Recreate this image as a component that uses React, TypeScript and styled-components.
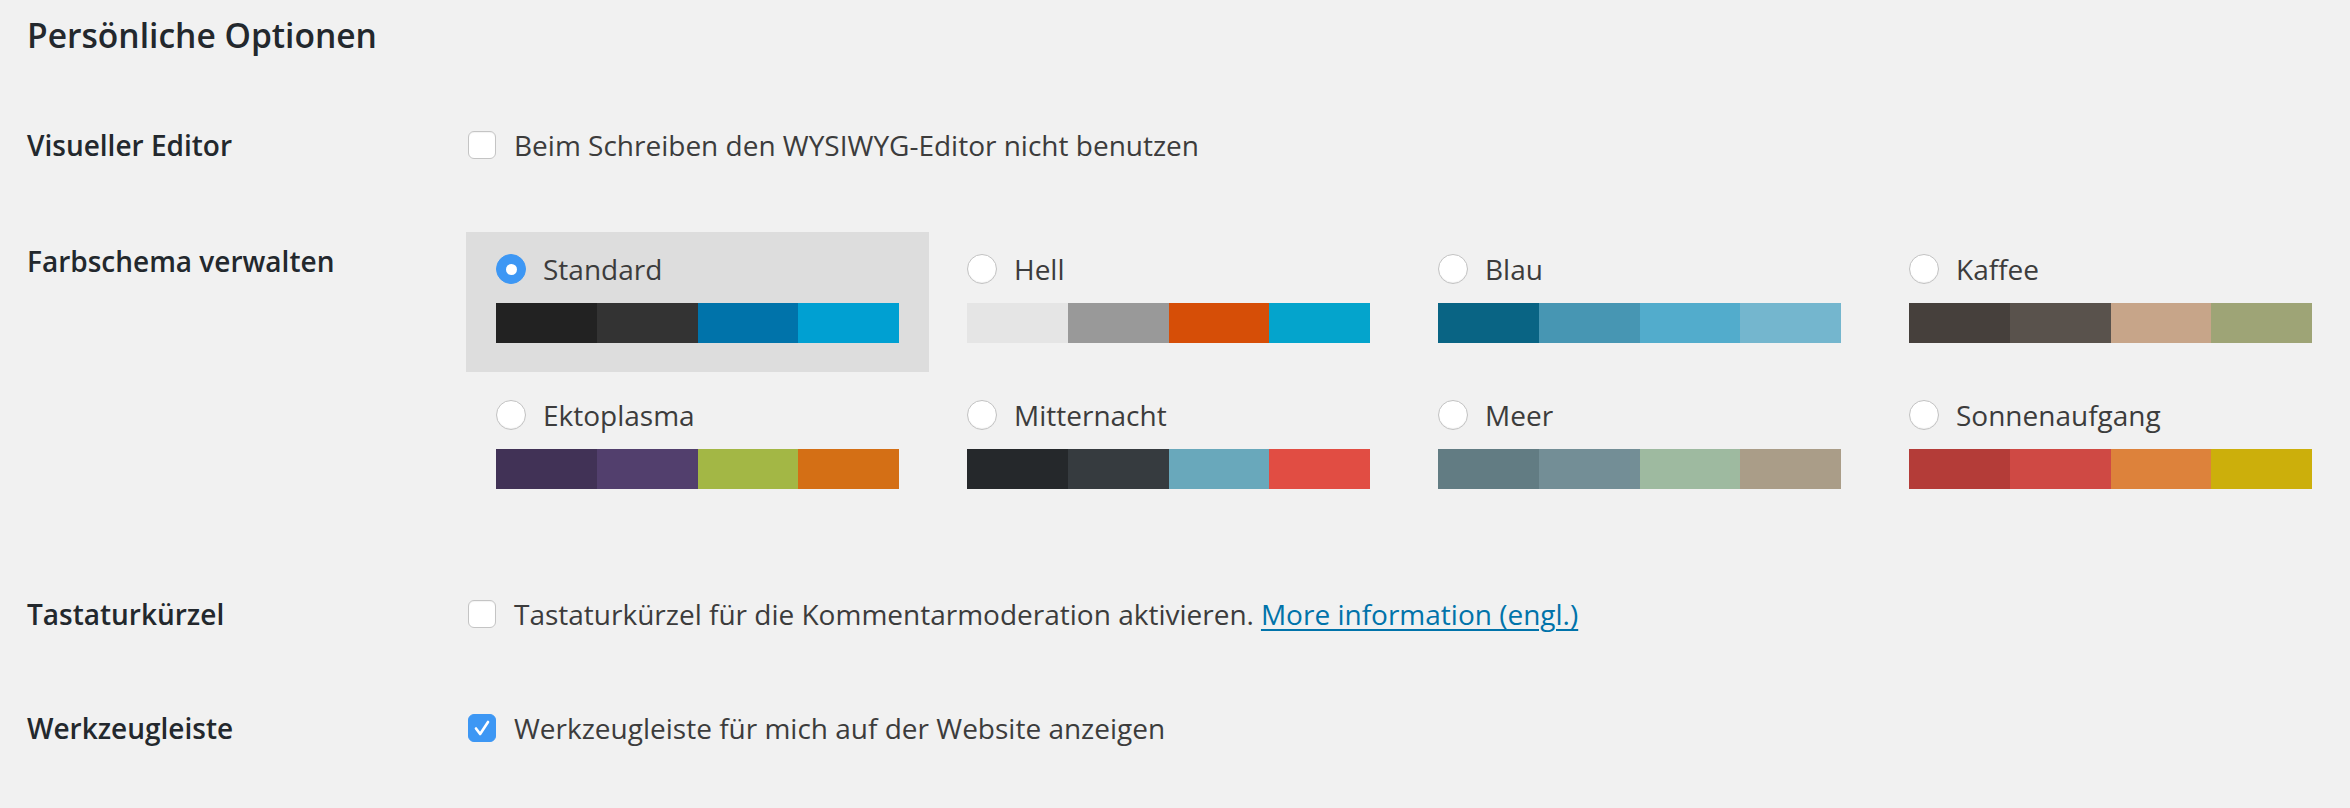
import React from 'react';
import styled, { createGlobalStyle } from 'styled-components';

const GlobalStyle = createGlobalStyle`
  html, body {
    margin: 0;
    padding: 0;
    background: #f1f1f1;
  }
  body {
    width: 2350px;
    height: 808px;
    overflow: hidden;
    font-family: "Open Sans", "Liberation Sans", sans-serif;
    color: #3c3c3c;
  }
`;

const Wrap = styled.div`
  padding-left: 27px;
`;

const Heading = styled.h2`
  margin: 0;
  padding-top: 13px;
  font-size: 33.6px;
  line-height: 44px;
  font-weight: 600;
  color: #23282d;
`;

const FormTable = styled.div`
  margin-top: 28px;
`;

const Row = styled.div<{ $pt: number; $pb: number }>`
  display: grid;
  grid-template-columns: 439px 1fr;
  padding: ${p => p.$pt}px 0 ${p => p.$pb}px;
`;

const Label = styled.div<{ $offset?: number }>`
  margin-top: ${p => p.$offset || 0}px;
  font-size: 28px;
  line-height: 40px;
  font-weight: 600;
  color: #23282d;
`;

const CheckLine = styled.label`
  display: flex;
  align-items: center;
  gap: 18px;
  font-size: 28px;
  line-height: 40px;
  color: #3c3c3c;
`;

const Box = styled.span<{ $checked?: boolean }>`
  box-sizing: border-box;
  flex: none;
  width: 28px;
  height: 28px;
  margin-left: 2px;
  border-radius: 6px;
  display: flex;
  align-items: center;
  justify-content: center;
  background: ${p => (p.$checked ? '#3d97f4' : '#fff')};
  border: 1px solid ${p => (p.$checked ? '#3d97f4' : '#c4c4c4')};
  box-shadow: ${p => (p.$checked ? 'none' : 'inset 0 1px 1px rgba(0,0,0,0.05)')};
`;

const Link = styled.a`
  color: #0073aa;
  text-decoration: underline;
  text-underline-offset: 4px;
  text-decoration-thickness: 2px;
  margin-left: 7px;
`;

const Schemes = styled.div`
  display: grid;
  grid-template-columns: repeat(4, 463px);
  column-gap: 8px;
  row-gap: 6px;
`;

const Option = styled.div<{ $selected?: boolean }>`
  padding: 10px 30px 29px;
  background: ${p => (p.$selected ? '#dddddd' : 'transparent')};
`;

const OptionLabel = styled.div`
  display: flex;
  align-items: center;
  gap: 17px;
  height: 54px;
  font-size: 28px;
  line-height: 1;
  color: #3c3c3c;
`;

const Radio = styled.span<{ $checked?: boolean }>`
  box-sizing: border-box;
  flex: none;
  width: 30px;
  height: 30px;
  border-radius: 50%;
  display: flex;
  align-items: center;
  justify-content: center;
  background: ${p => (p.$checked ? '#3d97f4' : '#fff')};
  border: 1px solid ${p => (p.$checked ? '#3d97f4' : '#c2c2c2')};
  box-shadow: ${p => (p.$checked ? 'none' : 'inset 0 -1px 1px rgba(0,0,0,0.06)')};
`;

const Dot = styled.span`
  width: 11px;
  height: 11px;
  border-radius: 50%;
  background: #fff;
`;

const Palette = styled.div`
  display: flex;
  height: 40px;
  margin-top: 7px;
`;

const Swatch = styled.div<{ $color: string }>`
  flex: 1;
  background: ${p => p.$color};
`;

const schemes = [
  { name: 'Standard', colors: ['#222222', '#333333', '#0073aa', '#00a0d2'], selected: true },
  { name: 'Hell', colors: ['#e5e5e5', '#999999', '#d64e07', '#04a4cc'] },
  { name: 'Blau', colors: ['#096484', '#4796b3', '#52accc', '#74b6ce'] },
  { name: 'Kaffee', colors: ['#46403c', '#59524c', '#c7a589', '#9ea476'] },
  { name: 'Ektoplasma', colors: ['#413256', '#523f6d', '#a3b745', '#d46f15'] },
  { name: 'Mitternacht', colors: ['#25282b', '#363b3f', '#69a8bb', '#e14d43'] },
  { name: 'Meer', colors: ['#627c83', '#738e96', '#9ebaa0', '#aa9d88'] },
  { name: 'Sonnenaufgang', colors: ['#b43c38', '#cf4944', '#dd823b', '#ccaf0b'] },
];

const Checkbox: React.FC<{ checked?: boolean }> = ({ checked }) => (
  <Box $checked={checked}>
    {checked && (
      <svg width="28" height="28" viewBox="0 0 28 28">
        <path d="M7.5 14.5 L12 20.5 L20.5 7.5" fill="none" stroke="#fff" strokeWidth="2.8" strokeLinecap="round" strokeLinejoin="round" />
      </svg>
    )}
  </Box>
);

export default function App() {
  return (
    <Wrap>
      <GlobalStyle />
      <Heading>Persönliche Optionen</Heading>
      <FormTable>
        <Row $pt={40} $pb={40}>
          <Label>Visueller Editor</Label>
          <CheckLine>
            <Checkbox />
            Beim Schreiben den WYSIWYG-Editor nicht benutzen
          </CheckLine>
        </Row>
        <Row $pt={27} $pb={36}>
          <Label $offset={9}>Farbschema verwalten</Label>
          <Schemes>
            {schemes.map(s => (
              <Option key={s.name} $selected={s.selected}>
                <OptionLabel>
                  <Radio $checked={s.selected}>{s.selected && <Dot />}</Radio>
                  {s.name}
                </OptionLabel>
                <Palette>
                  {s.colors.map(c => (
                    <Swatch key={c} $color={c} />
                  ))}
                </Palette>
              </Option>
            ))}
          </Schemes>
        </Row>
        <Row $pt={40} $pb={37}>
          <Label>Tastaturkürzel</Label>
          <CheckLine>
            <Checkbox />
            <span>
              Tastaturkürzel für die Kommentarmoderation aktivieren.
              <Link href="#">More information (engl.)</Link>
            </span>
          </CheckLine>
        </Row>
        <Row $pt={37} $pb={40}>
          <Label>Werkzeugleiste</Label>
          <CheckLine>
            <Checkbox checked />
            Werkzeugleiste für mich auf der Website anzeigen
          </CheckLine>
        </Row>
      </FormTable>
    </Wrap>
  );
}
